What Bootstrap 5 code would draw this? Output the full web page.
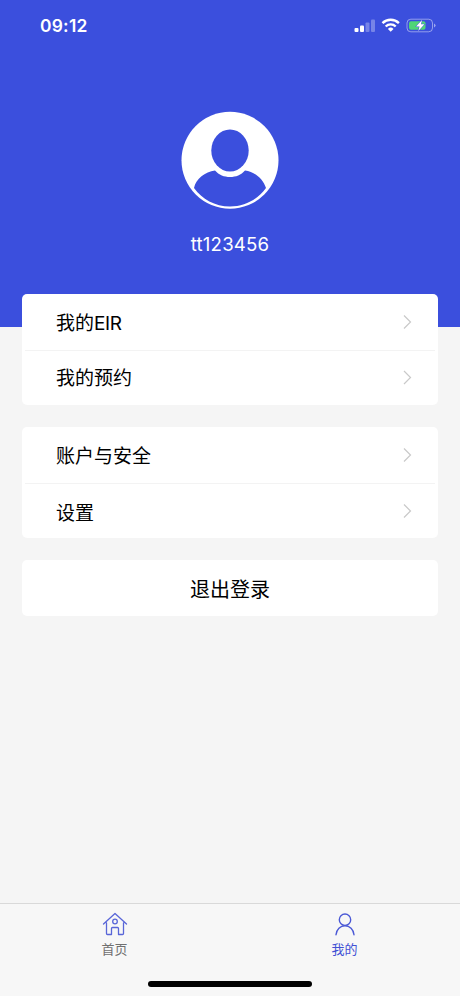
<!DOCTYPE html>
<html lang="zh-CN">
<head>
<meta charset="utf-8">
<meta name="viewport" content="width=device-width, initial-scale=1">
<title>我的</title>
<link href="https://cdn.jsdelivr.net/npm/bootstrap@5.3.0/dist/css/bootstrap.min.css" rel="stylesheet">
<style>
  body { background: #f5f5f5; font-family: Inter, "Noto Sans CJK SC", sans-serif; color: #000; overflow: hidden; }
  svg { display: block; flex: none; }
  .hero { background: #3b4fdd; height: 327px; }
  .status-bar { height: 50px; padding: 1px 24px 0 40px; }
  .clock { font-size: 17.4px; font-weight: 600; line-height: 1; letter-spacing: .25px; }
  .avatar { margin-top: 61px; }
  .username { font-size: 18.6px; line-height: 24px; margin-top: 23px; letter-spacing: .2px; }
  .menus { margin: -33px 22px 0; gap: 22px; }
  .panel { --bs-list-group-border-radius: 5px; --bs-list-group-bg: #fff; }
  .panel .entry { height: 56px; padding: 0 24px 0 34px; border: 0; font-size: 19px; color: #000; }
  .panel .entry + .entry { height: 55px; background: linear-gradient(#f3f3f3, #f3f3f3) 3px 0 / calc(100% - 6px) 1px no-repeat #fff; }
  .entry-label { padding-top: 4px; }
  .entry + .entry .entry-label { padding-top: 4px; }
  .panel:nth-child(2) .entry-label { padding-top: 5px; }
  .panel:nth-child(2) .entry + .entry .entry-label { padding-top: 7px; }
  .latin { letter-spacing: -.4px; }
  .panel .exit { padding: 3px 0 0; font-size: 20px; }
  .tabs { height: 93px; background: #f7f7f7; border-top: 1px solid #d9d9d9; }
  .tab { color: #3f4fd3; font-size: 13px; line-height: 18px; padding: 8px 1px 0 0; gap: 4px; }
  .tab-label { color: #707070; }
  .tab.active .tab-label { color: #4150d4; }
  .home-bar { width: 164px; height: 6px; margin-bottom: 9px; }
</style>
<script src="https://cdn.jsdelivr.net/npm/bootstrap@5.3.0/dist/js/bootstrap.bundle.min.js"></script>
</head>
<body class="vh-100 d-flex flex-column">
<header class="hero text-white d-flex flex-column align-items-center flex-shrink-0">
  <div class="status-bar w-100 d-flex align-items-center justify-content-between">
    <span class="clock">09:12</span>
    <svg width="82" height="18" viewBox="0 0 82 18">
      <g fill="#fff">
        <rect x="0.5" y="11" width="4" height="4" rx="1"/>
        <rect x="6" y="8.500" width="4" height="6.5" rx="1"/>
        <rect x="11.500" y="5.500" width="4" height="9.500" rx="1" opacity=".3"/>
        <rect x="17" y="2.500" width="4" height="12.500" rx="1" opacity=".3"/>
      </g>
      <g fill="none" stroke="#fff" stroke-width="2.4">
        <path d="M28.500 6.200a11.600 11.600 0 0 1 16.400 0"/>
        <path d="M31.700 9.500a7 7 0 0 1 10 0"/>
      </g>
      <path d="M36.700 14.800l-2.800-2.900a4 4 0 0 1 5.600 0z" fill="#fff"/>
      <g transform="translate(0 -1)">
        <rect x="53" y="3.200" width="25.500" height="12.600" rx="3.800" fill="none" stroke="#fff" stroke-opacity=".45"/>
        <path d="M80 7.500q3.200 2 0 4z" fill="#fff" opacity=".5"/>
        <rect x="55" y="5.200" width="16.500" height="8.600" rx="2" fill="#50d577"/>
        <path d="M68 4l-6 6.500h3.500L64.300 15l6.200-6.700H67z" fill="#fff" stroke="#3b4fdd" stroke-width="1" paint-order="stroke"/>
      </g>
    </svg>
  </div>
  <svg class="avatar" width="98" height="98" viewBox="0 0 98 98">
    <circle cx="49" cy="49.300" r="48.500" fill="#fff"/>
    <g fill="#3b4fdd">
      <ellipse cx="49" cy="39.500" rx="18.700" ry="21"/>
      <path d="M34 59.500C24 61 15 67.500 13 77c8 11 21 18.500 36 18.500S77 88 85 77C82 67.500 74 61 64 59.500C60 64 55 66 49 66S38 64 34 59.500Z"/>
    </g>
  </svg>
  <div class="username">tt123456</div>
</header>
<main class="menus d-flex flex-column flex-grow-1">
  <div class="list-group panel">
    <a href="#" class="list-group-item entry d-flex align-items-center justify-content-between"><span class="entry-label">我的<span class="latin">EIR</span></span>
      <svg width="14" height="16" viewBox="0 0 14 16" fill="none" stroke="#c9c9c9" stroke-width="1.200"><path d="M4 1.500L10.500 8 4 14.500"/></svg></a>
    <a href="#" class="list-group-item entry d-flex align-items-center justify-content-between"><span class="entry-label">我的预约</span>
      <svg width="14" height="16" viewBox="0 0 14 16" fill="none" stroke="#c9c9c9" stroke-width="1.200"><path d="M4 1L10.500 7.500 4 14"/></svg></a>
  </div>
  <div class="list-group panel">
    <a href="#" class="list-group-item entry d-flex align-items-center justify-content-between"><span class="entry-label">账户与安全</span>
      <svg width="14" height="16" viewBox="0 0 14 16" fill="none" stroke="#c9c9c9" stroke-width="1.200"><path d="M4 1.500L10.500 8 4 14.500"/></svg></a>
    <a href="#" class="list-group-item entry d-flex align-items-center justify-content-between"><span class="entry-label">设置</span>
      <svg width="14" height="16" viewBox="0 0 14 16" fill="none" stroke="#c9c9c9" stroke-width="1.200"><path d="M4 1.500L10.500 8 4 14.500"/></svg></a>
  </div>
  <div class="list-group panel">
    <a href="#" class="list-group-item entry exit d-flex align-items-center justify-content-center">退出登录</a>
  </div>
</main>
<footer class="tabs d-flex flex-column justify-content-between align-items-center flex-shrink-0">
  <nav class="row g-0 w-100">
    <a href="#" class="col-6 tab d-flex flex-column align-items-center text-decoration-none">
      <svg width="26" height="24" viewBox="0 0 26 24" fill="none" stroke="#5966d8" stroke-width="1.300" stroke-linejoin="round" stroke-linecap="round">
        <path d="M1.500 12L13 1.500 24.500 12M4.500 11v10.500q0 1 1 1h4v-6q0-1 1-1h5q1 0 1 1v6h4q1 0 1-1V11"/>
        <circle cx="13" cy="9.500" r="2.300"/>
      </svg>
      <span class="tab-label">首页</span>
    </a>
    <a href="#" class="col-6 tab active d-flex flex-column align-items-center text-decoration-none">
      <svg width="26" height="24" viewBox="0 0 26 24" fill="none" stroke="#4b59d6" stroke-width="1.400" stroke-linecap="round">
        <circle cx="13" cy="7.700" r="5.700"/>
        <path d="M4 22.800C4.500 17.500 8.300 13.800 13 13.800S21.500 17.500 22 22.800"/>
      </svg>
      <span class="tab-label">我的</span>
    </a>
  </nav>
  <div class="home-bar bg-black rounded-pill"></div>
</footer>
</body>
</html>
